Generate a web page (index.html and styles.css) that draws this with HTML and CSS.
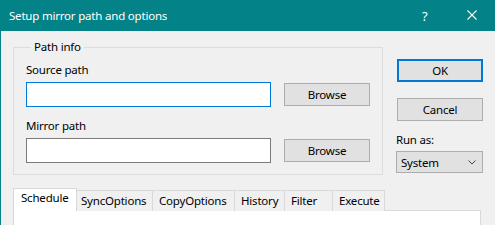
FILE: index.html
```html
<!DOCTYPE html>
<html>
<head>
<meta charset="utf-8">
<link rel="stylesheet" href="styles.css">
</head>
<body>
<div class="window">
  <div class="titlebar">
    <span class="title">Setup mirror path and options</span>
    <span class="help">?</span>
    <svg class="close" width="10" height="10" viewBox="0 0 10 10"><path d="M0.5 0.5 L9.5 9.5 M9.5 0.5 L0.5 9.5" stroke="#fff" stroke-width="1.1" fill="none"/></svg>
  </div>
  <div class="content">
    <div class="top">
      <fieldset class="group">
        <legend>Path info</legend>
        <div class="label">Source path</div>
        <div class="row">
          <div class="input focused"></div>
          <button class="btn browse">Browse</button>
        </div>
        <div class="label second">Mirror path</div>
        <div class="row">
          <div class="input"></div>
          <button class="btn browse">Browse</button>
        </div>
      </fieldset>
      <div class="side">
        <button class="btn default">OK</button>
        <button class="btn cancel">Cancel</button>
        <div class="label runas">Run as:</div>
        <div class="select">
          <span>System</span>
          <svg width="8" height="5" viewBox="0 0 8 5"><path d="M0.5 0.5 L4 4 L7.5 0.5" stroke="#444" stroke-width="1" fill="none"/></svg>
        </div>
      </div>
    </div>
    <div class="tabs">
      <div class="tab active t-schedule">Schedule</div>
      <div class="tab t-sync">SyncOptions</div>
      <div class="tab t-copy">CopyOptions</div>
      <div class="tab t-history">History</div>
      <div class="tab t-filter">Filter</div>
      <div class="tab t-execute">Execute</div>
    </div>
    <div class="panel"></div>
  </div>
</div>
</body>
</html>
```

FILE: styles.css
```css
* { box-sizing: border-box; }
html, body { margin: 0; padding: 0; }
body {
  width: 495px;
  height: 225px;
  overflow: hidden;
  background: #f0f0f0;
  font-family: "Noto Sans", "Open Sans", sans-serif;
  font-size: 11.5px;
  letter-spacing: -0.2px;
  color: #000;
}
.window {
  height: 225px;
  border-left: 1px solid #038387;
  display: flex;
  flex-direction: column;
}
.titlebar {
  height: 31px;
  background: #038387;
  color: #fff;
  display: flex;
  align-items: center;
  margin-left: -1px;
  padding-left: 9px;
  flex-shrink: 0;
}
.title { flex: 1; line-height: 16px; padding-top: 0px; }
.help { width: 8px; margin-right: 37px; font-size: 13px; line-height: 16px; }
.close { margin-right: 18px; margin-top: -1px; }
.content { padding: 8px 12px 0 12px; flex: 1; display: flex; flex-direction: column; }
.top { display: flex; gap: 13px; }
.group {
  margin: 0;
  width: 370px;
  border: 1px solid #dcdcdc;
  padding: 7px 11px 11px 12px;
}
.group legend {
  padding: 0 3px;
  margin-left: 5px;
  line-height: 16px;
}
.label { line-height: 16px; }
.label.second { margin-top: 11px; }
.row { display: flex; align-items: center; gap: 13px; margin-top: 4px; }
.input {
  width: 245px;
  height: 25px;
  background: #fff;
  border: 1px solid #7a7a7a;
}
.input.focused { border-color: #0078d7; }
.btn {
  font: inherit;
  letter-spacing: inherit;
  color: #000;
  background: #e1e1e1;
  border: 1px solid #adadad;
  height: 23px;
  padding: 0;
  margin: 0;
  line-height: 19px;
}
.browse { width: 86px; }
.side { width: 87px; padding-top: 20px; display: flex; flex-direction: column; }
.side .btn { width: 86px; margin-left: 1px; }
.default { border: 2px solid #0078d7; }
.cancel { margin-top: 16px; }
.runas { margin-top: 11px; }
.select {
  margin-top: 3px;
  height: 22px;
  border: 1px solid #adadad;
  background: #e1e1e1;
  display: flex;
  align-items: center;
  justify-content: space-between;
  padding: 0 6px 0 4px;
}
.tabs {
  display: flex;
  margin-top: 14px;
  padding-left: 2px;
  height: 22px;
  align-items: flex-end;
  position: relative;
  z-index: 1;
}
.tab {
  height: 21px;
  border: 1px solid #d9d9d9;
  border-bottom: none;
  border-left: none;
  background: #f0f0f0;
  padding: 0 6px;
  line-height: 19px;
  white-space: nowrap;
}
.tab.active {
  height: 23px;
  margin: 0 -2px;
  background: #fff;
  border-left: 1px solid #d9d9d9;
  padding: 0 7px;
  line-height: 17px;
  position: relative;
  z-index: 2;
}
.t-schedule { width: 64px; }
.t-sync { width: 78px; padding-left: 6px; }
.t-copy { width: 82px; }
.t-history { width: 50px; }
.t-filter { width: 48px; }
.t-execute { width: 52px; }
.panel {
  width: 468px;
  flex: 1;
  background: #fff;
  border: 1px solid #d9d9d9;
  border-bottom: none;
  margin-top: -1px;
}
```
